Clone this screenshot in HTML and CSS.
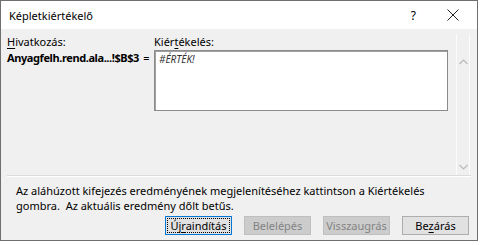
FILE: index.html
```html
<!DOCTYPE html>
<html lang="hu">
<head>
  <meta charset="UTF-8">
  <title>Képletkiértékelő</title>
  <link rel="stylesheet" href="styles.css">
</head>
<body>
  <div class="dialog">
    <div class="titlebar">
      <span class="title">Képletkiértékelő</span>
      <span class="help">?</span>
      <svg class="close" width="12" height="12" viewBox="0 0 12 12"><path d="M0.5 0.5 L11.5 11.5 M11.5 0.5 L0.5 11.5" stroke="#222" stroke-width="1" fill="none"/></svg>
    </div>
    <div class="content">
      <div class="top">
        <div class="ref">
          <div class="label"><u>H</u>ivatkozás:</div>
          <div class="ref-value">Anyagfelh.rend.ala...!$B$3</div>
        </div>
        <div class="eq">=</div>
        <div class="eval">
          <div class="label">Kiér<u>t</u>ékelés:</div>
          <div class="eval-box"><i>#ÉRTÉK!</i></div>
        </div>
        <div class="scroll">
          <svg width="9" height="6" viewBox="0 0 9 6"><path d="M0.5 5 L4.5 1 L8.5 5" stroke="#b9b9b9" stroke-width="1.2" fill="none"/></svg>
          <svg width="9" height="6" viewBox="0 0 9 6"><path d="M0.5 1 L4.5 5 L8.5 1" stroke="#b9b9b9" stroke-width="1.2" fill="none"/></svg>
        </div>
      </div>
      <div class="sep"></div>
      <p class="hint">Az aláhúzott kifejezés eredményének megjelenítéséhez kattintson a Kiértékelés<br>gombra.&nbsp; Az aktuális eredmény dőlt betűs.</p>
      <div class="buttons">
        <button class="btn focus"><span>Új<u>r</u>aindítás</span></button>
        <button class="btn" disabled>Belelépés</button>
        <button class="btn" disabled>Visszaugrás</button>
        <button class="btn">Be<u>z</u>árás</button>
      </div>
    </div>
  </div>
</body>
</html>
```

FILE: styles.css
```css
body { margin: 0; background: #fff; font-family: "Noto Sans", sans-serif; font-size: 11px; color: #000; }
u { text-decoration-thickness: 1px; text-underline-offset: 2px; }

.dialog { width: 476px; height: 239px; border: 1px solid #6f6f6f; display: flex; flex-direction: column; background: #f0f0f0; }

.titlebar { height: 28px; background: #fff; display: flex; align-items: center; padding: 0 0 0 8px; }
.title { font-size: 11px; flex: 1; }
.help { font-size: 12px; margin-right: 31px; }
.close { margin-right: 18px; }

.content { flex: 1; display: flex; flex-direction: column; padding: 5px 6px 0 6px; }

.top { display: flex; height: 141px; }
.label { height: 16px; line-height: 16px; }
.ref { width: 132px; }
.ref-value { font-weight: bold; line-height: 16px; white-space: nowrap; letter-spacing: -0.4px; }
.eq { width: 15px; padding-top: 16px; line-height: 16px; text-align: center; }
.eval { width: 294px; }
.eval-box { height: 57px; background: #fff; border: 1px solid #8c8c8c; box-shadow: inset 1px 1px 0 #a0a0a0; padding: 1px 4px; font-size: 10px; color: #333; }
.scroll { width: 12px; margin-left: 8px; border-left: 1px solid #fbfbfb; border-right: 1px solid #fbfbfb; display: flex; flex-direction: column; justify-content: space-between; align-items: center; padding: 25px 0 5px 0; }

.sep { height: 1px; background: #dcdcdc; border-bottom: 1px solid #fff; }

.hint { margin: 6px 0 0 9px; line-height: 15px; }

.buttons { display: flex; justify-content: flex-end; gap: 12px; margin-top: 3px; padding-right: 2px; }
.btn { width: 67px; height: 19px; padding: 0; font: inherit; font-size: 11px; background: #e1e1e1; border: 1px solid #adadad; color: #000; }
.btn:disabled { background: #cccccc; border-color: #bfbfbf; color: #838383; }
.btn.focus { border: 1px solid #0078d7; padding: 1px; }
.btn.focus span { display: block; height: 100%; border: 1px dotted #000; box-sizing: border-box; line-height: 13px; }
```
